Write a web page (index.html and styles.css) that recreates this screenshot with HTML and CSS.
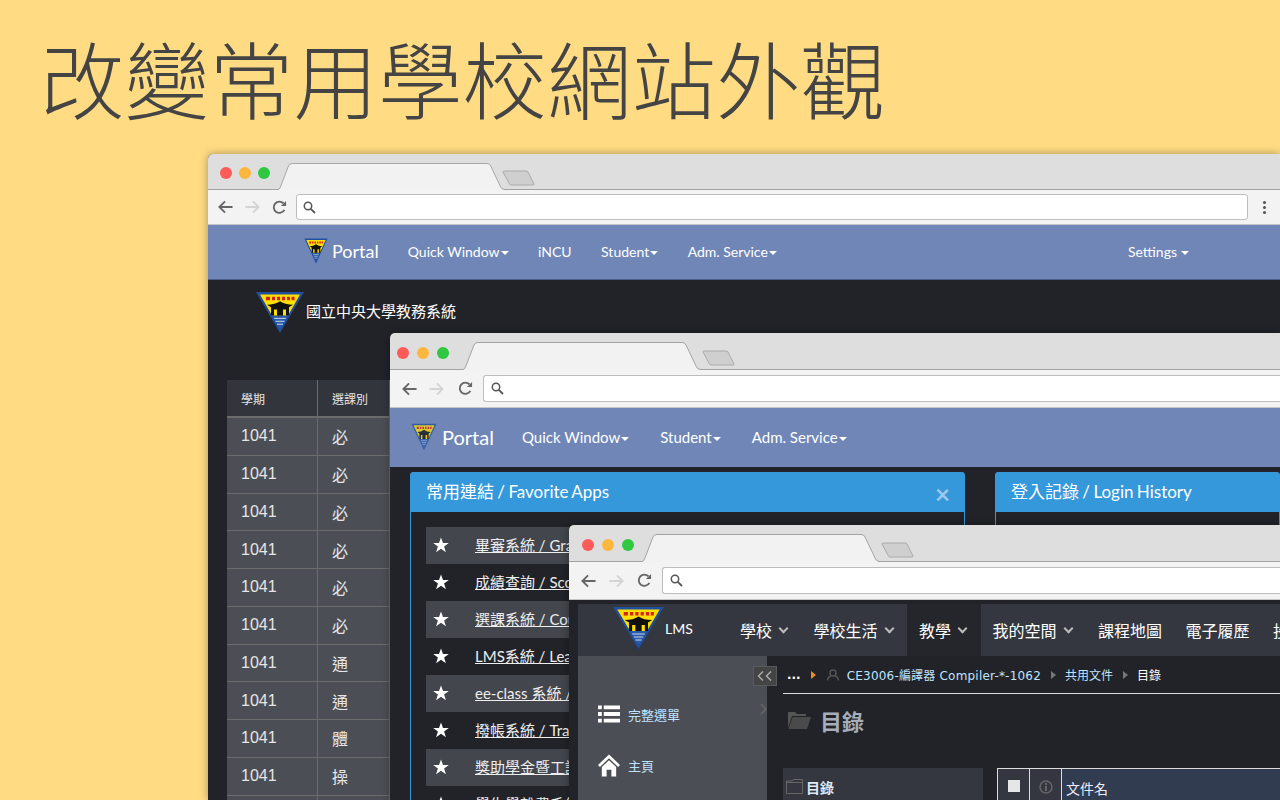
FILE: index.html
```html
<!DOCTYPE html>
<html lang="zh-Hant">
<head>
  <meta charset="UTF-8">
  <title>改變常用學校網站外觀</title>
  <link rel="stylesheet" href="styles.css">
</head>
<body>

<!-- shared drawings -->
<svg class="defs" width="0" height="0">
  <symbol id="ncu-logo" viewBox="0 0 50 44" preserveAspectRatio="none">
    <path d="M1 1H49L25 43Z" fill="#1f4f9e"/>
    <path d="M5 3.500H45L33 25H17Z" fill="#ffdf00"/>
    <path d="M17 25H33L25 39Z" fill="#2a5aa8"/>
    <path d="M11 6h4v3.500h-4zM17 6h3v3.500h-3zM22 6h3v3.500h-3zM27 6h3v3.500h-3zM32 6h3v3.500h-3zM36.500 6h3v3.500h-3z" fill="#d8201c"/>
    <path d="M12 14Q20 14 25 10.500Q30 14 38 14L34 16.500V25H16V16.500Z" fill="#111"/>
    <path d="M19 19h3v6h-3zM28 19h3v6h-3z" fill="#ffdf00"/>
    <path d="M19 28H31M20.500 31H29.500M22 34H28" stroke="#c9d6ee" stroke-width="1"/>
  </symbol>
  <symbol id="ic-back" viewBox="0 0 16 14">
    <path d="M7.500 1L1.500 7L7.500 13M1.500 7H15.500" fill="none" stroke="currentColor" stroke-width="2"/>
  </symbol>
  <symbol id="ic-forward" viewBox="0 0 16 14">
    <path d="M8.500 1L14.500 7L8.500 13M14.500 7H.5" fill="none" stroke="currentColor" stroke-width="2"/>
  </symbol>
  <symbol id="ic-reload" viewBox="0 0 16 16">
    <path d="M13.200 10.500A6 6 0 1 1 12.300 3.700" fill="none" stroke="currentColor" stroke-width="2"/>
    <path d="M9.500 6.500H15V1Z" fill="currentColor"/>
  </symbol>
  <symbol id="ic-search" viewBox="0 0 13 13">
    <circle cx="5" cy="5" r="3.700" fill="none" stroke="currentColor" stroke-width="1.500"/>
    <path d="M7.800 7.800L12 12" stroke="currentColor" stroke-width="1.800"/>
  </symbol>
  <symbol id="ic-star" viewBox="0 0 16 16">
    <path d="M8 .5L10 6H15.800L11.100 9.500L12.900 15.300L8 11.800L3.100 15.300L4.900 9.500L.2 6H6Z" fill="currentColor"/>
  </symbol>
  <symbol id="ic-tab" viewBox="0 0 238 28" preserveAspectRatio="none">
    <path d="M0 27.500Q1.500 27.500 2.500 25L11 3Q12 .5 15 .5H219Q222 .5 223 3L233.500 25Q234.500 27.500 238 27.500V29H0Z" fill="#f2f2f2" stroke="#a3a3a3"/>
  </symbol>
  <symbol id="ic-newtab" viewBox="0 0 33 16">
    <path d="M2 1H24Q25 1 26 2L32 14Q32.500 15 31 15H9Q8 15 7.500 14L1 2Q1 1 2 1Z" fill="#cfcfcf" stroke="#aaa"/>
  </symbol>
</svg>

<h1 class="headline">改變常用學校網站外觀</h1>

<!-- window 1: grades -->
<section class="win win-grades">
  <div class="win-strip">
    <span class="dot dot-red"></span><span class="dot dot-yellow"></span><span class="dot dot-green"></span>
    <svg class="tab"><use href="#ic-tab"/></svg>
    <svg class="newtab"><use href="#ic-newtab"/></svg>
  </div>
  <div class="win-toolbar">
    <svg class="tool tool-back"><use href="#ic-back"/></svg>
    <svg class="tool tool-fwd"><use href="#ic-forward"/></svg>
    <svg class="tool tool-reload"><use href="#ic-reload"/></svg>
    <div class="address"><svg class="search"><use href="#ic-search"/></svg></div>
    <div class="kebab"><i></i><i></i><i></i></div>
  </div>
  <nav class="portal-nav">
    <a class="portal-brand"><svg class="portal-logo"><use href="#ncu-logo"/></svg>Portal</a>
    <a class="has-caret">Quick Window</a>
    <a>iNCU</a>
    <a class="has-caret">Student</a>
    <a class="has-caret">Adm. Service</a>
    <a class="has-caret nav-end">Settings</a>
  </nav>
  <div class="grades-body">
    <div class="grades-head">
      <svg class="grades-logo"><use href="#ncu-logo"/></svg>
      <span>國立中央大學教務系統</span>
    </div>
    <div class="grades-table">
      <div class="cell cell-head">學期</div><div class="cell cell-head">選課別</div><div class="cell cell-head"></div>
      <div class="cell">1041</div><div class="cell">必</div><div class="cell"></div>
      <div class="cell">1041</div><div class="cell">必</div><div class="cell"></div>
      <div class="cell">1041</div><div class="cell">必</div><div class="cell"></div>
      <div class="cell">1041</div><div class="cell">必</div><div class="cell"></div>
      <div class="cell">1041</div><div class="cell">必</div><div class="cell"></div>
      <div class="cell">1041</div><div class="cell">必</div><div class="cell"></div>
      <div class="cell">1041</div><div class="cell">通</div><div class="cell"></div>
      <div class="cell">1041</div><div class="cell">通</div><div class="cell"></div>
      <div class="cell">1041</div><div class="cell">體</div><div class="cell"></div>
      <div class="cell">1041</div><div class="cell">操</div><div class="cell"></div>
      <div class="cell"></div><div class="cell"></div><div class="cell"></div>
    </div>
  </div>
</section>

<!-- window 2: portal home -->
<section class="win win-portal">
  <div class="win-strip">
    <span class="dot dot-red"></span><span class="dot dot-yellow"></span><span class="dot dot-green"></span>
    <svg class="tab"><use href="#ic-tab"/></svg>
    <svg class="newtab"><use href="#ic-newtab"/></svg>
  </div>
  <div class="win-toolbar">
    <svg class="tool tool-back"><use href="#ic-back"/></svg>
    <svg class="tool tool-fwd"><use href="#ic-forward"/></svg>
    <svg class="tool tool-reload"><use href="#ic-reload"/></svg>
    <div class="address"><svg class="search"><use href="#ic-search"/></svg></div>
  </div>
  <nav class="portal-nav">
    <a class="portal-brand"><svg class="portal-logo"><use href="#ncu-logo"/></svg>Portal</a>
    <a class="has-caret">Quick Window</a>
    <a class="has-caret">Student</a>
    <a class="has-caret">Adm. Service</a>
  </nav>
  <div class="portal-body">
    <div class="panel panel-apps">
      <div class="panel-title">常用連結 / Favorite Apps<span class="panel-close">×</span></div>
      <ul class="app-list">
        <li><svg class="star"><use href="#ic-star"/></svg><a>畢審系統 / Graduation</a></li>
        <li><svg class="star"><use href="#ic-star"/></svg><a>成績查詢 / Score Inquiry</a></li>
        <li><svg class="star"><use href="#ic-star"/></svg><a>選課系統 / Course Selection</a></li>
        <li><svg class="star"><use href="#ic-star"/></svg><a>LMS系統 / Learning</a></li>
        <li><svg class="star"><use href="#ic-star"/></svg><a>ee-class 系統 / ee-class</a></li>
        <li><svg class="star"><use href="#ic-star"/></svg><a>撥帳系統 / Transfer</a></li>
        <li><svg class="star"><use href="#ic-star"/></svg><a>獎助學金暨工讀系統</a></li>
        <li><svg class="star"><use href="#ic-star"/></svg><a>學生學雜費系統</a></li>
      </ul>
    </div>
    <div class="panel panel-login">
      <div class="panel-title">登入記錄 / Login History</div>
    </div>
  </div>
</section>

<!-- window 3: LMS -->
<section class="win win-lms">
  <div class="win-strip">
    <span class="dot dot-red"></span><span class="dot dot-yellow"></span><span class="dot dot-green"></span>
    <svg class="tab"><use href="#ic-tab"/></svg>
    <svg class="newtab"><use href="#ic-newtab"/></svg>
  </div>
  <div class="win-toolbar">
    <svg class="tool tool-back"><use href="#ic-back"/></svg>
    <svg class="tool tool-fwd"><use href="#ic-forward"/></svg>
    <svg class="tool tool-reload"><use href="#ic-reload"/></svg>
    <div class="address"><svg class="search"><use href="#ic-search"/></svg></div>
  </div>
  <div class="lms-page">
    <nav class="lms-nav">
      <div class="lms-brand"><svg class="lms-logo"><use href="#ncu-logo"/></svg><span>LMS</span></div>
      <a class="lms-link has-chev">學校</a>
      <a class="lms-link has-chev">學校生活</a>
      <a class="lms-link has-chev lms-active">教學</a>
      <a class="lms-link has-chev">我的空間</a>
      <a class="lms-link">課程地圖</a>
      <a class="lms-link">電子履歷</a>
      <a class="lms-link">投影片</a>
    </nav>
    <div class="lms-main">
      <aside class="lms-side">
        <div class="side-item">
          <svg class="side-icon" viewBox="0 0 23 18"><path d="M0 0h4v4H0zM6 0h17v4H6zM0 7h4v4H0zM6 7h17v4H6zM0 14h4v4H0zM6 14h17v4H6z" fill="#fff"/></svg>
          <span>完整選單</span>
          <svg class="side-chev" viewBox="0 0 7 12"><path d="M1 1L6 6L1 11" fill="none" stroke="#666" stroke-width="1.500"/></svg>
        </div>
        <div class="side-item">
          <svg class="side-icon side-home" viewBox="0 0 23 24"><path d="M11.500 1L0 12L2 14L11.500 5L21 14L23 12Z" fill="#fff"/><path d="M4 14L11.500 7L19 14V24H14V17H9V24H4Z" fill="#fff"/></svg>
          <span>主頁</span>
        </div>
        <div class="side-toggle">
          <svg viewBox="0 0 16 10" width="16" height="10"><path d="M6 .5L1.500 5L6 9.500M14 .5L9.500 5L14 9.500" fill="none" stroke="#aaa" stroke-width="1.500"/></svg>
        </div>
      </aside>
      <div class="lms-content">
        <div class="crumbs">
          <span class="crumb-more">...</span>
          <i class="crumb-arrow crumb-arrow-hot"></i>
          <svg class="crumb-user" viewBox="0 0 12 12"><circle cx="6" cy="4" r="3" fill="none" stroke="#555" stroke-width="1.500"/><path d="M.5 11.500Q1 7.500 4 7M11.500 11.500Q11 7.500 8 7" fill="none" stroke="#555" stroke-width="1.500"/></svg>
          <span class="crumb-course">CE3006-編譯器 Compiler-*-1062</span>
          <i class="crumb-arrow"></i>
          <span>共用文件</span>
          <i class="crumb-arrow"></i>
          <span class="crumb-now">目錄</span>
        </div>
        <h2 class="page-title">
          <svg class="title-folder" viewBox="0 0 24 18"><path d="M1 17V2Q1 1 2 1H8L10 3H19V5H5L1 17Z" fill="#555"/><path d="M5.500 6H24L20 18H1.500Z" fill="#4a4a4a"/></svg>
          目錄
        </h2>
        <div class="files">
          <div class="tree-head">
            <svg class="tree-folder" viewBox="0 0 17 15"><path d="M.5 14.500V2H6L7 .5H16.500V14.500ZM.5 3.500H16.500" fill="none" stroke="#666"/></svg>
            目錄
          </div>
          <div class="file-table">
            <div class="file-cell"><span class="checkbox"></span></div>
            <div class="file-cell">
              <svg class="info" viewBox="0 0 14 14"><circle cx="7" cy="7" r="6" fill="none" stroke="#666" stroke-width="1.500"/><path d="M6 3h2v2H6zM6 6h2v5H6z" fill="#666"/></svg>
            </div>
            <div class="file-cell file-name">文件名</div>
          </div>
        </div>
      </div>
    </div>
  </div>
</section>

</body>
</html>
```

FILE: styles.css
```css
:root {
  --sand: #ffdc83;
  --page-dark: #222328;
  --portal-blue: #6f86b7;
  --panel-blue: #3498db;
  --cjk: "Lato", "Noto Sans CJK TC", sans-serif;
}

* {
  box-sizing: border-box;
}

html, body {
  height: 800px;
  margin: 0;
  overflow: hidden;
}

body {
  background: var(--sand);
  font-family: var(--cjk);
  position: relative;
}

.defs {
  position: absolute;
}

.headline {
  margin: 0;
  padding: 25px 0 0 40px;
  color: #444;
  font-size: 84.5px;
  font-weight: 300;
  line-height: 112px;
  white-space: nowrap;
}

/* browser frames */
.win {
  position: absolute;
  right: 0;
  bottom: 0;
  overflow: hidden;
  border-radius: 5px 0 0 0;
  background: var(--page-dark);
  box-shadow: 0 0 8px rgba(0, 0, 0, 0.35);
  display: flex;
  flex-direction: column;
}
.win-grades { left: 208px; top: 154px; }
.win-portal { left: 390px; top: 333px; }
.win-lms { left: 569px; top: 525px; }

.win-strip {
  display: flex;
  align-items: center;
  height: 37px;
  padding-left: 7px;
  background: #dedede;
  border-bottom: 1px solid #a3a3a3;
  flex: none;
}
.win-grades .win-strip { height: 36px; padding-left: 12px; }
.win-lms .win-strip { padding-left: 13px; }

.dot {
  width: 12px;
  height: 12px;
  margin-right: 8px;
  margin-top: 4px;
  border-radius: 50%;
}
.win-grades .dot { margin-right: 7px; margin-top: 3px; }
.dot-red { background: #fc5b57; }
.dot-yellow { background: #fdb73e; }
.dot-green { background: #2fc840; }

.tab {
  align-self: flex-end;
  width: 238px;
  height: 28px;
  margin-left: 6px;
  margin-bottom: -1px;
  position: relative;
  flex: none;
}
.win-grades .tab { width: 227px; height: 27px; margin-left: 1px; }
.win-lms .tab { margin-left: 0; }

.newtab {
  align-self: flex-end;
  width: 33px;
  height: 16px;
  margin: 0 0 3px 1px;
  flex: none;
}
.win-grades .newtab { margin-left: -3px; }

.win-toolbar {
  display: flex;
  align-items: center;
  height: 38px;
  background: #f3f3f3;
  border-bottom: 1px solid #c6c6c6;
  flex: none;
}
.win-grades .win-toolbar { height: 35px; }

.tool {
  height: 14px;
  width: 15px;
  flex: none;
}
.tool-back { color: #666; margin-left: 12px; }
.tool-fwd { color: #d4d4d4; margin-left: 12px; }
.tool-reload { color: #666; margin-left: 14px; height: 15px; }
.win-grades .tool-back { margin-left: 10px; }
.win-grades .tool-reload { margin-left: 12px; }
.win-lms .tool-fwd { margin-left: 13px; }
.win-lms .tool-reload { margin-left: 13px; }

.address {
  display: flex;
  align-items: center;
  flex: 1;
  height: 27px;
  margin-left: 10px;
  padding-left: 7px;
  background: #fff;
  border: 1px solid #bdbdbd;
  border-right: none;
  border-radius: 3px 0 0 3px;
}
.win-grades .address {
  height: 26px;
  margin-left: 9px;
  padding-left: 6px;
  border-right: 1px solid #bdbdbd;
  border-radius: 3px;
}
.search {
  width: 13px;
  height: 13px;
  color: #555;
}

.kebab {
  display: flex;
  flex-direction: column;
  gap: 2px;
  width: 32px;
  align-items: center;
}
.kebab i {
  width: 3px;
  height: 3px;
  border-radius: 50%;
  background: #555;
}

/* portal navbar */
.portal-nav {
  display: flex;
  align-items: center;
  flex: none;
  color: #fff;
  background: var(--portal-blue);
}
.win-grades .portal-nav {
  gap: 29.500px;
  height: 55px;
  padding: 0 91px 2px 96px;
  font-size: 14px;
  border-bottom: 1px solid #4d5f8a;
}
.win-portal .portal-nav {
  gap: 31px;
  height: 59px;
  padding: 0 0 1px 21px;
  font-size: 15px;
}
.portal-brand {
  display: flex;
  align-items: center;
  gap: 4px;
  font-size: 18px;
  margin-right: -0.5px;
}
.win-portal .portal-brand { font-size: 20px; gap: 5px; margin-right: -3px; }
.portal-logo {
  width: 24px;
  height: 26px;
}
.win-portal .portal-logo {
  width: 26px;
  height: 28px;
  opacity: 0.75;
}
.has-caret::after {
  content: "";
  display: inline-block;
  margin-left: 1px;
  vertical-align: 2px;
  border: 4px solid transparent;
  border-top-color: currentColor;
  border-bottom: none;
}
.nav-end {
  margin-left: auto;
}
.nav-end::after {
  margin-left: 4px;
}

/* grades page */
.grades-body {
  flex: 1;
  padding: 11px 0 0 19px;
  color: #fff;
}
.grades-head {
  display: flex;
  align-items: center;
  gap: 1px;
  height: 43px;
  margin-left: 28px;
  font-size: 15px;
}
.grades-head span { margin-bottom: 5px; }
.grades-logo {
  width: 50px;
  height: 43px;
}
.grades-table {
  display: grid;
  grid-template-columns: 91px 72px 1fr;
  margin-top: 46px;
  background: #4c4e55;
}
.cell {
  display: flex;
  align-items: center;
  height: 37.750px;
  padding-left: 14px;
  color: #e6e6e6;
  font-family: "Liberation Sans", "Noto Sans CJK TC", sans-serif;
  font-size: 16px;
  border-bottom: 1px solid #6b6b6b;
  border-right: 1px solid #6b6b6b;
}
.cell-head {
  height: 38px;
  background: #33353d;
  font-size: 12px;
  border-bottom-width: 2px;
}

/* portal page */
.portal-body {
  display: flex;
  gap: 30px;
  flex: 1;
  padding: 5px 0 0 20px;
}
.panel {
  border: 1px solid var(--panel-blue);
  border-bottom: none;
  border-radius: 4px 4px 0 0;
}
.panel-apps { width: 555px; }
.panel-login { flex: 1; }
.panel-title {
  display: flex;
  justify-content: space-between;
  align-items: center;
  height: 40px;
  padding: 0 15px 3px 16px;
  margin: -1px -1px 0;
  color: #fff;
  background: var(--panel-blue);
  border-radius: 4px 4px 0 0;
  font-size: 17px;
  word-spacing: -1px;
}
.panel-close {
  color: #9cc8ec;
  font-size: 26px;
  font-weight: 700;
  line-height: 1;
  margin-top: 6px;
}
.app-list {
  list-style: none;
  margin: 15px 15px 0;
  padding: 0;
}
.app-list li {
  display: flex;
  align-items: center;
  height: 37px;
  padding-bottom: 2px;
  color: #eee;
  font-size: 15px;
}
.app-list li:nth-child(odd) {
  background: #43464c;
}
.app-list a {
  text-decoration: underline;
  white-space: nowrap;
}
.star {
  width: 16px;
  height: 16px;
  margin: 0 26px 0 7px;
  color: #fff;
  flex: none;
}

/* LMS page */
.lms-page {
  flex: 1;
  padding: 4px 0 0 9px;
  min-height: 0;
}
.lms-nav {
  display: flex;
  align-items: stretch;
  height: 52px;
  background: #353740;
  color: #fff;
  white-space: nowrap;
}
.lms-brand {
  display: flex;
  align-items: center;
  width: 150px;
  padding-left: 34px;
  font-size: 14px;
  flex: none;
}
.lms-logo {
  width: 53px;
  height: 44px;
  margin-top: -5px;
}
.lms-brand span { margin-top: -4px; }
.lms-link {
  display: flex;
  align-items: center;
  padding: 0 11.500px 0 12px;
  font-family: "Noto Sans CJK TC", sans-serif;
  font-size: 16px;
  flex: none;
}
.lms-active {
  background: #25262b;
}
.has-chev::after {
  content: "";
  box-sizing: border-box;
  width: 7px;
  height: 7px;
  margin: 0 3px 3px 8px;
  border-right: 2px solid #bbb;
  border-bottom: 2px solid #bbb;
  transform: rotate(45deg);
}
.lms-main {
  display: flex;
  height: 144px;
}
.lms-side {
  position: relative;
  width: 189px;
  padding: 40px 0 0 20px;
  background: #4b4e55;
  flex: none;
}
.side-item {
  display: flex;
  align-items: center;
  gap: 8px;
  height: 36px;
  margin-bottom: 15px;
  color: #bfe3ff;
  font-family: "Noto Sans CJK TC", sans-serif;
  font-size: 13px;
}
.side-icon {
  width: 22px;
  height: 18px;
}
.side-home {
  height: 24px;
}
.side-chev {
  position: absolute;
  right: 0;
  top: 47px;
  width: 7px;
  height: 12px;
}
.side-toggle {
  position: absolute;
  top: 10px;
  right: -10px;
  display: flex;
  align-items: center;
  justify-content: center;
  width: 24px;
  height: 20px;
  background: #444;
  border: 1px solid #5a5a5a;
}
.lms-content {
  flex: 1;
  padding-left: 16px;
  min-width: 0;
}
.crumbs {
  display: flex;
  align-items: center;
  gap: 7px;
  height: 38px;
  color: #bfe3ff;
  font-family: "DejaVu Sans", "Noto Sans CJK TC", sans-serif;
  font-size: 12px;
  border-bottom: 1px solid #ddd;
  white-space: nowrap;
}
.crumb-course {
  letter-spacing: 0.200px;
}
.crumb-more {
  margin: 0 0 0 4px;
  color: #fff;
  font-weight: 700;
}
.crumb-arrow {
  width: 0;
  height: 0;
  margin: 0 2px 0 3px;
  border: 4px solid transparent;
  border-left: 5px solid #777;
  border-right: none;
}
.crumb-arrow-hot {
  border-left-color: #f08a24;
  margin-right: 4px;
}
.crumb-user {
  width: 12px;
  height: 12px;
  margin-right: 1px;
}
.crumb-now {
  color: #fff;
}
.page-title {
  display: flex;
  align-items: center;
  gap: 9px;
  height: 74px;
  margin: 0 0 0 4px;
  padding-bottom: 22px;
  color: #a4adb8;
  font-family: "Noto Sans CJK TC", sans-serif;
  font-size: 22px;
  font-weight: 700;
}
.title-folder {
  width: 24px;
  height: 18px;
}
.files {
  display: flex;
  gap: 14px;
  height: 32px;
}
.tree-head {
  display: flex;
  align-items: center;
  align-self: stretch;
  gap: 3px;
  width: 200px;
  padding: 5px 0 0 3px;
  background: #353740;
  color: #dfeaf5;
  font-family: "Noto Sans CJK TC", sans-serif;
  font-size: 14px;
  font-weight: 700;
}
.tree-folder {
  width: 17px;
  height: 15px;
}
.file-table {
  display: grid;
  grid-template-columns: 32px 32px 1fr;
  flex: 1;
  border-top: 1px solid #ddd;
  border-left: 1px solid #ddd;
}
.file-cell {
  display: flex;
  align-items: flex-start;
  justify-content: center;
  padding-top: 11px;
  background: #353740;
  border-right: 1px solid #ddd;
}
.checkbox {
  width: 12px;
  height: 12px;
  background: #e6e6e6;
}
.info {
  width: 14px;
  height: 14px;
}
.file-name {
  justify-content: flex-start;
  padding: 9px 0 0 4px;
  color: #eef;
  background: #323c50;
  border-right: none;
  font-family: "Noto Sans CJK TC", sans-serif;
  font-size: 14px;
}
```
